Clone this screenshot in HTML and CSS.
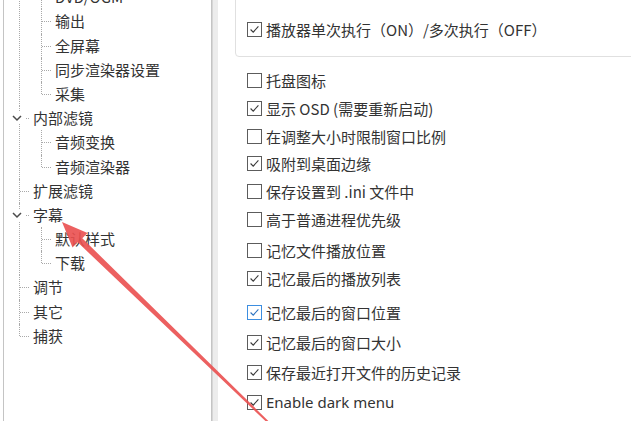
FILE: index.html
```html
<!DOCTYPE html>
<html lang="zh-CN">
<head>
    <meta charset="UTF-8">
    <title>选项 - 播放器</title>
    <link rel="stylesheet" href="styles.css">
</head>
<body>

    <div class="dialog">
        <div class="tree-pane">
            <ul class="tree">
                <li>
                    <span class="chev"><svg viewBox="0 0 10 10"><path d="M1 3 L5 7 L9 3"/></svg></span>
                    <span class="label">播放器</span>
                    <ul>
                        <li><span class="label">DVD/OGM</span></li>
                        <li><span class="label">输出</span></li>
                        <li><span class="label">全屏幕</span></li>
                        <li><span class="label">同步渲染器设置</span></li>
                        <li><span class="label">采集</span></li>
                    </ul>
                </li>
                <li>
                    <span class="chev"><svg viewBox="0 0 10 10"><path d="M1 3 L5 7 L9 3"/></svg></span>
                    <span class="label">内部滤镜</span>
                    <ul>
                        <li><span class="label">音频变换</span></li>
                        <li><span class="label">音频渲染器</span></li>
                    </ul>
                </li>
                <li><span class="label">扩展滤镜</span></li>
                <li>
                    <span class="chev"><svg viewBox="0 0 10 10"><path d="M1 3 L5 7 L9 3"/></svg></span>
                    <span class="label">字幕</span>
                    <ul>
                        <li><span class="label">默认样式</span></li>
                        <li><span class="label">下载</span></li>
                    </ul>
                </li>
                <li><span class="label">调节</span></li>
                <li><span class="label">其它</span></li>
                <li><span class="label">捕获</span></li>
            </ul>
        </div>

        <div class="splitter"></div>

        <div class="options">
            <div class="groupbox">
                <div class="row">
                    <span class="box checked"><svg viewBox="0 0 15 15"><path d="M3 7.5 L6 10.5 L12 4"/></svg></span>
                    <span>播放器单次执行（ON）/多次执行（OFF）</span>
                </div>
            </div>

            <div class="opts opts-a">
                <div class="row"><span class="box"></span><span>托盘图标</span></div>
                <div class="row"><span class="box checked"><svg viewBox="0 0 15 15"><path d="M3 7.5 L6 10.5 L12 4"/></svg></span><span>显示 OSD (需要重新启动)</span></div>
                <div class="row"><span class="box"></span><span>在调整大小时限制窗口比例</span></div>
                <div class="row"><span class="box checked"><svg viewBox="0 0 15 15"><path d="M3 7.5 L6 10.5 L12 4"/></svg></span><span>吸附到桌面边缘</span></div>
                <div class="row"><span class="box"></span><span>保存设置到 .ini 文件中</span></div>
                <div class="row"><span class="box"></span><span>高于普通进程优先级</span></div>
            </div>

            <div class="opts opts-b">
                <div class="row"><span class="box"></span><span>记忆文件播放位置</span></div>
                <div class="row"><span class="box checked"><svg viewBox="0 0 15 15"><path d="M3 7.5 L6 10.5 L12 4"/></svg></span><span>记忆最后的播放列表</span></div>
            </div>

            <div class="opts opts-c">
                <div class="row"><span class="box checked hover"><svg viewBox="0 0 15 15"><path d="M3 7.5 L6 10.5 L12 4"/></svg></span><span>记忆最后的窗口位置</span></div>
                <div class="row"><span class="box checked"><svg viewBox="0 0 15 15"><path d="M3 7.5 L6 10.5 L12 4"/></svg></span><span>记忆最后的窗口大小</span></div>
                <div class="row"><span class="box checked"><svg viewBox="0 0 15 15"><path d="M3 7.5 L6 10.5 L12 4"/></svg></span><span>保存最近打开文件的历史记录</span></div>
                <div class="row"><span class="box checked"><svg viewBox="0 0 15 15"><path d="M3 7.5 L6 10.5 L12 4"/></svg></span><span class="latin">Enable dark menu</span></div>
            </div>
        </div>
    </div>

    <!-- annotation arrow drawn over the screenshot -->
    <svg class="arrow" viewBox="0 0 631 421">
        <polygon points="62,222 87.5,233 82.3,238.3 270.7,423.3 269.3,424.7 77.7,242.3 72.5,247.5"/>
    </svg>

</body>
</html>
```

FILE: styles.css
```css
body {
    margin: 0;
    width: 631px;
    height: 421px;
    overflow: hidden;
    background: #ffffff;
    font-family: "Noto Sans CJK SC", "Noto Sans", sans-serif;
    font-size: 15px;
    color: #333333;
    position: relative;
}

.dialog {
    display: flex;
    height: 421px;
}

/* left navigation tree */
.tree-pane {
    margin-left: 3px;
    width: 207px;
    border-left: 1px solid #c4c4c4;
    border-right: 1px solid #c4c4c4;
    overflow: hidden;
}

.tree,
.tree ul {
    list-style: none;
    margin: 0;
    padding: 0;
}

.tree {
    margin-top: -39px;
    padding-left: 15px;
}

.tree ul {
    padding-left: 8px;
}

.tree li {
    position: relative;
    padding-left: 14px;
}

.tree li::before {
    content: "";
    position: absolute;
    left: 0;
    top: 0;
    bottom: 0;
    border-left: 1px dotted #a9a9a9;
}

.tree li:last-child::before {
    bottom: auto;
    height: 12px;
}

.tree li::after {
    content: "";
    position: absolute;
    left: 1px;
    top: 12px;
    width: 9px;
    border-top: 1px dotted #a9a9a9;
}

.tree .label {
    display: block;
    height: 24.2px;
    line-height: 24.2px;
    white-space: nowrap;
}

.chev {
    position: absolute;
    left: -7px;
    top: 6px;
    width: 14px;
    height: 12px;
    background: #ffffff;
    z-index: 1;
}

.chev svg {
    display: block;
    width: 10px;
    height: 10px;
    margin-top: 1px;
}

.chev path {
    fill: none;
    stroke: #4a4a4a;
    stroke-width: 1.5;
}

.splitter {
    width: 5px;
    background: #ececec;
    border-left: 1px solid #d6d6d6;
}

/* right options page */
.options {
    flex: 1;
    min-width: 0;
}

.groupbox {
    box-sizing: border-box;
    height: 67px;
    margin: -10px -12px 0 17px;
    padding: 28px 0 0 11px;
    border: 1px solid #e0e0e0;
    border-radius: 4px;
}

.groupbox .row {
    height: 20px;
}

.opts {
    margin-left: 29px;
}

.opts-a {
    margin-top: 10px;
}

.opts-a .row {
    height: 27.7px;
}

.opts-b {
    margin-top: 3.5px;
}

.opts-b .row {
    height: 28px;
}

.opts-c {
    margin-top: 4.5px;
}

.opts-c .row {
    height: 30px;
}

.row {
    display: flex;
    align-items: center;
    gap: 4px;
    white-space: nowrap;
}

.box {
    box-sizing: border-box;
    width: 15px;
    height: 15px;
    border: 1px solid #5c5c5c;
    background: #ffffff;
    flex-shrink: 0;
}

.box svg {
    display: block;
    width: 13px;
    height: 13px;
}

.box path {
    fill: none;
    stroke: #3a3a3a;
    stroke-width: 1.3;
}

.box.hover {
    border-color: #3d8ee0;
}

.box.hover path {
    stroke: #2f74c0;
}

.latin {
    font-family: "Noto Sans", sans-serif;
    font-size: 15px;
}

.arrow {
    position: absolute;
    left: 0;
    top: 0;
    width: 631px;
    height: 421px;
    pointer-events: none;
}

.arrow polygon {
    fill: #ea4f4f;
    opacity: 0.9;
}
```
